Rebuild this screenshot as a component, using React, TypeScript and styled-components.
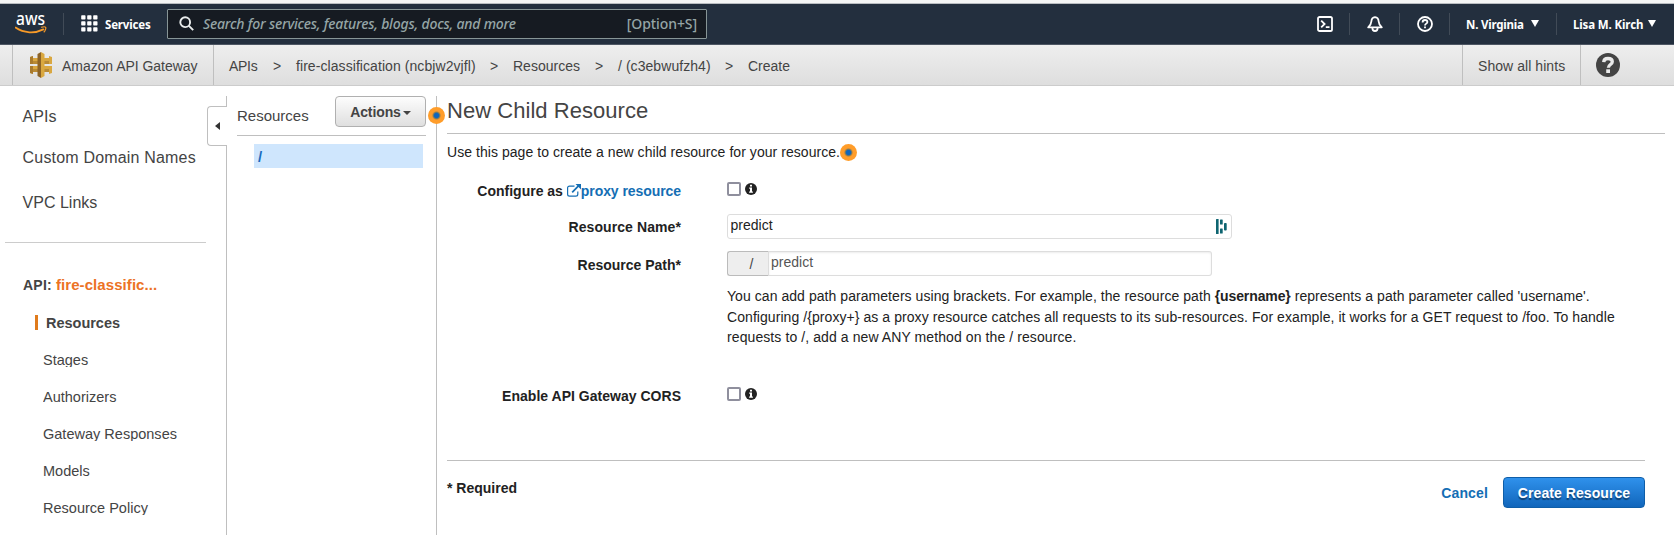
import React from "react";
import styled, { createGlobalStyle, css } from "styled-components";

const GlobalStyle = createGlobalStyle`
  *, *::before, *::after { box-sizing: border-box; }
  body { margin: 0; background: #fff; overflow: hidden; }
  input, button { font-family: inherit; }
`;

const Page = styled.div`
  display: flex;
  flex-direction: column;
  width: 100%;
  height: 100vh;
  overflow: hidden;
  font: 14px/20px "Liberation Sans", Arial, sans-serif;
  color: #222;
`;

/* ---------- top navigation ---------- */

const WindowEdge = styled.div`
  height: 4px;
  flex: none;
  background: #f4f5f5;
  border-bottom: 1px solid #b9bdc1;
`;

const NavBar = styled.header`
  display: flex;
  align-items: center;
  flex: none;
  height: 41px;
  padding: 0 18px 1px 15px;
  background: #232f3e;
  border-bottom: 1px solid #4d5663;
  font: bold 11.5px/20px "Noto Sans", sans-serif;
  color: #fff;
`;

const NavDivider = styled.i`
  width: 1px;
  height: 22px;
  background: #414b57;
`;

const NavText = styled.span`
  padding-top: 2px;
`;

const ServicesButton = styled.div`
  display: flex;
  align-items: center;
  gap: 7px;
  width: 103px;
  padding-left: 17px;
  letter-spacing: -0.18px;
`;

const LogoCell = styled.div`
  width: 48px;
  height: 38px;
`;

const SearchBox = styled.div`
  display: flex;
  align-items: center;
  width: 540px;
  height: 30px;
  padding: 0 9px 0 11px;
  background: #161b22;
  border: 1px solid #879596;
  border-radius: 1px;
  color: #95a5a6;
  font-weight: 500;
  font-size: 14px;
`;

const SearchPlaceholder = styled.span`
  flex: 1;
  margin-left: 9px;
  font-style: italic;
  letter-spacing: -0.2px;
`;

const Shortcut = styled.span`
  letter-spacing: -0.08px;
`;

const NavTools = styled.div`
  display: flex;
  align-items: center;
  margin-left: auto;
`;

const ToolIcon = styled.div`
  display: flex;
  justify-content: center;
  width: 49px;
`;

const NavMenu = styled.div<{ $width: number; $spacing: number }>`
  display: flex;
  align-items: center;
  justify-content: space-between;
  width: ${(p) => p.$width}px;
  padding-left: 16px;
  letter-spacing: ${(p) => p.$spacing}px;
`;

const RegionDivider = styled(NavDivider)`
  margin-left: 17px;
`;

const MenuCaret = styled.i`
  border: 4px solid transparent;
  border-top: 7px solid #fff;
  border-bottom: 0;
`;

/* ---------- service bar ---------- */

const ServiceBar = styled.div`
  display: flex;
  flex: none;
  height: 41px;
  padding-left: 12px;
  background: linear-gradient(#eeeeee, #dedede);
  border-bottom: 1px solid #ccc;
  color: #444;
`;

const BarText = styled.span`
  padding-top: 2px;
`;

const ServiceName = styled.div`
  display: flex;
  align-items: center;
  width: 202px;
  padding-left: 17px;
  border: solid #bfbfbf;
  border-width: 0 1px;
  gap: 9px;
  letter-spacing: -0.04px;
`;

const Crumbs = styled.nav`
  display: flex;
  align-items: center;
  padding: 2px 0 0 15px;
`;

const Crumb = styled.span<{ $width: number; $spacing?: number }>`
  width: ${(p) => p.$width}px;
  white-space: nowrap;
  letter-spacing: ${(p) => p.$spacing ?? 0}px;
`;

const Separator = styled.span`
  width: 23px;
`;

const HintsButton = styled.div`
  display: flex;
  align-items: center;
  width: 119px;
  margin-left: auto;
  padding-left: 15px;
  border: solid #bfbfbf;
  border-width: 0 1px;
  letter-spacing: 0.06px;
`;

const HelpCell = styled.div`
  display: flex;
  align-items: center;
  width: 93px;
  padding-left: 15px;
`;

/* ---------- body columns ---------- */

const Columns = styled.div`
  display: flex;
  flex: 1;
  min-height: 0;
`;

const Sidebar = styled.aside`
  width: 207px;
  padding: 12px 0 0;
  color: #444;
`;

const SideLink = styled.div<{ $height: number; $spacing?: number }>`
  height: ${(p) => p.$height}px;
  padding: 9px 0 0 22.6px;
  font-size: 16px;
  line-height: 20px;
  letter-spacing: ${(p) => p.$spacing ?? 0}px;
`;

const SideRule = styled.hr`
  height: 1px;
  width: 201px;
  margin: 0 0 0 5px;
  border: 0;
  background: #ccc;
`;

const ApiTitle = styled.div`
  display: flex;
  padding: 32px 0 0 23px;
  height: 72px;
  font-weight: bold;
  gap: 4px;
  letter-spacing: 0.25px;
`;

const ApiName = styled.span`
  color: #ec7224;
  font-size: 15px;
  letter-spacing: 0.07px;
`;

const SideItem = styled.div<{ $active?: boolean }>`
  height: 15px;
  margin: 0 0 22px 43px;
  overflow: hidden;
  font-size: 14.5px;
  line-height: 20px;
  letter-spacing: 0.01px;
  ${(p) =>
    p.$active &&
    css`
      margin-left: 35px;
      padding-left: 8px;
      border-left: 3px solid #e07b1c;
      font-weight: bold;
      letter-spacing: -0.02px;
    `}
`;

const ItemText = styled.span`
  display: block;
  margin-top: -2px;
`;

const CollapseGutter = styled.div`
  display: flex;
  flex-direction: column;
  width: 20px;
  padding-top: 10px;
  flex: none;
`;

const GutterLine = styled.div<{ $height?: number }>`
  ${(p) => (p.$height ? `height: ${p.$height}px;` : "flex: 1;")}
  border-right: 1px solid #bfbfbf;
`;

const CollapseTab = styled.div`
  display: flex;
  align-items: center;
  justify-content: flex-start;
  height: 40px;
  padding-left: 7px;
  border: 1px solid #bfbfbf;
  border-right: 0;
  border-radius: 4px 0 0 4px;
`;

const CollapseArrow = styled.i`
  border: 4px solid transparent;
  border-right: 5px solid #333;
  border-left: 0;
`;

const ResourceColumn = styled.section`
  width: 210px;
  flex: none;
  margin-top: 10px;
  border-right: 1px solid #bfbfbf;
  padding-left: 10px;
`;

const ResourceHeader = styled.div`
  display: flex;
  justify-content: space-between;
  width: 189px;
  height: 40px;
  border-bottom: 1px solid #bfbfbf;
  color: #444;
`;

const ResourceHeading = styled.span`
  padding-top: 10px;
  font-size: 15px;
`;

const ActionsButton = styled.button`
  display: flex;
  align-items: center;
  justify-content: center;
  gap: 2px;
  width: 91px;
  height: 31px;
  padding: 0;
  border: 1px solid #b0b0b0;
  border-radius: 4px;
  background: linear-gradient(#fdfdfd, #dfdfdf);
  color: #444;
  font-size: 14px;
  font-weight: bold;
  letter-spacing: -0.1px;
`;

const ButtonCaret = styled.i`
  border: 4px solid transparent;
  border-top-color: #444;
  border-bottom: 0;
  margin-top: 2px;
`;

const SelectedResource = styled.div`
  width: 169px;
  height: 24px;
  margin: 8px 0 0 17px;
  padding: 3px 4px;
  background: #cfe6fd;
  color: #1a6bbd;
  font-weight: bold;
  font-size: 15px;
`;

/* ---------- form ---------- */

const Main = styled.main`
  flex: 1;
  min-width: 0;
  padding: 10px 9px 0 10px;
`;

const TitleRow = styled.div`
  position: relative;
  height: 38px;
  border-bottom: 1px solid #bfbfbf;
`;

const Title = styled.h1`
  margin: 0;
  font-size: 22px;
  font-weight: normal;
  line-height: 30px;
  color: #444;
  letter-spacing: 0.04px;
`;

const HintDot = styled.i`
  display: inline-block;
  flex: none;
  width: 17px;
  height: 17px;
  border-radius: 50%;
  background: radial-gradient(circle, #1166bb 0 2.2px, #7d7a5e 3.2px, #f5982c 4.4px, #ff9d2a 5px);
`;

const TitleHint = styled(HintDot)`
  position: absolute;
  left: -19px;
  top: 11px;
`;

const Intro = styled.div`
  display: flex;
  align-items: center;
  height: 38px;
  padding-bottom: 2px;
  letter-spacing: 0.05px;
`;

const Field = styled.div<{ $height: number }>`
  display: flex;
  height: ${(p) => p.$height}px;
`;

const Label = styled.label<{ $top: number; $spacing?: number }>`
  width: 234px;
  margin-right: 46px;
  flex: none;
  padding-top: ${(p) => p.$top}px;
  text-align: right;
  font-weight: bold;
  white-space: nowrap;
  letter-spacing: ${(p) => p.$spacing ?? 0}px;
`;

const DocLink = styled.a`
  color: #146eb4;
  letter-spacing: -0.07px;
  svg { vertical-align: -1px; }
`;

const CheckRow = styled.div<{ $top: number }>`
  display: flex;
  align-items: center;
  gap: 4px;
  height: 14px;
  margin-top: ${(p) => p.$top}px;
`;

const CheckBox = styled.input`
  appearance: none;
  width: 14px;
  height: 14px;
  margin: 0;
  border: 2px solid #8f8f9d;
  border-radius: 2px;
  background: #fff;
`;

const TextField = styled.div`
  display: flex;
  align-items: center;
  justify-content: space-between;
  width: 505px;
  height: 25px;
  padding: 0 4px 0 0;
  border: 1px solid #ddd;
  border-radius: 3px;
`;

const PathField = styled.div`
  display: flex;
  width: 485px;
  height: 25px;
`;

const PathPrefix = styled.span`
  width: 42px;
  padding: 2px 0 0 21.5px;
  border: 1px solid #bbb;
  border-right-color: #ddd;
  border-radius: 3px 0 0 3px;
  background: #eee;
  color: #444;
`;

const BareInput = styled.input<{ $muted?: boolean }>`
  flex: 1;
  min-width: 0;
  height: 20px;
  padding: 0 0 0 2.5px;
  border: 0;
  outline: 0;
  background: none;
  font-size: 14px;
  line-height: 20px;
  color: #222;
  margin-bottom: 3px;
  ${(p) =>
    p.$muted &&
    css`
      height: 25px;
      padding: 0 0 4px 2px;
      border: 1px solid #ddd;
      border-left: 0;
      border-radius: 0 3px 3px 0;
      box-shadow: inset 0 1px 2px rgba(0, 0, 0, 0.08);
      color: #555;
      margin: 0;
    `}
`;

const Help = styled.p`
  height: 99px;
  margin: 10px 0 0 280px;
  line-height: 20.5px;
  white-space: nowrap;
`;

const HelpLine = styled.span<{ $spacing: number }>`
  display: block;
  letter-spacing: ${(p) => p.$spacing}px;
  b { letter-spacing: -0.1px; }
`;

const Footer = styled.footer`
  display: flex;
  justify-content: flex-end;
  align-items: flex-start;
  width: 1198px;
  padding-top: 16px;
  border-top: 1px solid #bfbfbf;
  font-weight: bold;
`;

const Required = styled.span`
  margin: 1px auto 0 0;
`;

const Cancel = styled.a`
  margin: 6px 15px 0 0;
  color: #146eb4;
  letter-spacing: 0.15px;
`;

const CreateButton = styled.button`
  width: 142px;
  height: 31px;
  padding: 0;
  border: 1px solid #0f5ea8;
  border-radius: 4px;
  background: linear-gradient(#2f91ec, #1166bb);
  color: #fff;
  font-size: 14px;
  font-weight: bold;
  letter-spacing: 0.07px;
  text-shadow: 0 2px 1px rgba(0, 0, 0, 0.45);
`;

/* ---------- icons ---------- */

const LogoSvg = styled.svg`
  display: block;
`;

const AwsLogo = () => (
  <LogoSvg width="34" height="38" viewBox="0 -8 34 38">
    <text x="1" y="12" fontSize="17.5" fontWeight="500" fontFamily="Noto Sans, sans-serif" fill="#fff" textLength="29" lengthAdjust="spacingAndGlyphs">aws</text>
    <path d="M.5 14.6C8.8 20.4 20 20.7 28.4 16.4" fill="none" stroke="#f79a28" strokeWidth="1.8" strokeLinecap="round" />
    <path d="M26.2 14.3c1.8-.5 4-.6 4.5 0 .5.9-.4 3.6-2 5" fill="none" stroke="#f79a28" strokeWidth="1.2" />
  </LogoSvg>
);

const GridIcon = () => (
  <svg width="17" height="17" viewBox="0 0 17 17" fill="#fff">
    {[0, 6, 12].map((y) => [0, 6, 12].map((x) => <rect key={`${x}-${y}`} x={x + 0.2} y={y + 0.2} width="4.3" height="4.3" rx=".7" />))}
  </svg>
);

const SearchIcon = () => (
  <svg width="15" height="15" viewBox="0 0 15 15" fill="none" stroke="#eaeded" strokeWidth="1.9">
    <circle cx="6.2" cy="6.2" r="4.9" />
    <path d="M9.7 9.7 14.2 14.2" />
  </svg>
);

const TerminalIcon = () => (
  <svg width="16" height="16" viewBox="0 0 16 16" fill="none" stroke="#fff" strokeWidth="1.8">
    <rect x="1" y="1" width="14" height="14" rx="1.6" />
    <path d="m4.2 4.6 3.4 3.4-3.4 3.4M8.8 11.2h3.7" />
  </svg>
);

const BellIcon = () => (
  <svg width="16" height="16" viewBox="0 0 16 16" fill="none" stroke="#fff" strokeWidth="1.8" strokeLinejoin="round">
    <path d="M8 1.2C5.8 1.4 4.5 3.1 4.4 5.3 4.3 8.1 3 9.6 1.2 11.3h13.6C13 9.6 11.7 8.1 11.6 5.3 11.5 3.1 10.2 1.4 8 1.2Z" />
    <path d="M5.4 12c0 1.9 1 3 2.6 3s2.6-1.1 2.6-3" />
  </svg>
);

const HelpIcon = () => (
  <svg width="16" height="16" viewBox="0 0 16 16" fill="none" stroke="#fff" strokeWidth="1.8">
    <circle cx="8" cy="8" r="7" />
    <path d="M5.6 6.4C5.6 4.9 6.6 4 8 4s2.4.8 2.4 2c0 1.6-2.4 1.7-2.4 3.5M8 10.5v1.7" />
  </svg>
);

const GatewayIcon = () => (
  <svg width="23" height="26" viewBox="0 0 23 26">
    <path fill="#d9a741" d="M0 5l3-1v2h5v2h6V6h5V4l3 1v7h-8v2h8v7l-3 1v-2h-5v-2H8v2H3v2l-3-1v-7h8v-2H0z" />
    <path fill="#a87a2e" d="M0 5l3-1v8H0zM0 14h3v8l-3-1z" />
    <path fill="#b98a35" d="M3 9h5v3H3zM14 9h5v3h-5zM3 17h5v3H3zM14 17h5v3h-5z" />
    <path fill="#8e6427" d="M7.5 2 11 0v26l-3.5-2z" />
    <path fill="#daa840" d="m11 0 3.5 2v22L11 26z" />
  </svg>
);

const HelpBadge = () => (
  <svg width="24" height="24" viewBox="0 0 24 24">
    <circle cx="12" cy="12" r="12" fill="#444" />
    <path d="M7.7 9.1C7.8 6.6 9.5 5.5 12 5.5c2.6 0 4.3 1.2 4.3 3.2 0 2.8-3.9 2.8-3.9 6" fill="none" stroke="#eaeaea" strokeWidth="3.3" />
    <path fill="#eaeaea" d="M10.2 16.3H14V20h-3.8z" />
  </svg>
);

const ExternalIcon = () => (
  <svg width="14" height="13" viewBox="0 0 14 13" fill="none" stroke="#146eb4">
    <path strokeWidth="1.2" d="M7.5 2.1H2.6C1.3 2.1.6 2.8.6 4v6.3c0 1.2.7 1.9 2 1.9h6.2c1.3 0 2-.7 2-1.9V7.5" />
    <path strokeWidth="1.7" d="m5.2 8.3 6.5-6.6" />
    <path fill="#146eb4" stroke="none" d="M8.5 0H14v5.5z" />
  </svg>
);

const InfoIcon = () => (
  <svg width="12" height="12" viewBox="0 0 12 12">
    <circle cx="6" cy="6" r="6" fill="#222" />
    <path fill="#fff" d="M5 1.7h2v1.7H5zM4.2 4.5H7V8.5h.9v1.2H4.1V8.5H5V5.7h-.8z" />
  </svg>
);

const ManagerIcon = () => (
  <svg width="11" height="15" viewBox="0 0 11 15" fill="#0e6571">
    <rect width="2.6" height="15" rx=".5" />
    <rect x="4" y=".5" width="2.7" height="5" rx=".5" />
    <rect x="4" y="9.5" width="2.7" height="5" rx=".5" />
    <rect x="8" y="4" width="2.7" height="7.5" rx=".8" />
  </svg>
);

const sideItems = ["Stages", "Authorizers", "Gateway Responses", "Models", "Resource Policy"];

export default function App() {
  return (
    <Page>
      <GlobalStyle />
      <WindowEdge />
      <NavBar>
        <LogoCell><AwsLogo /></LogoCell>
        <NavDivider />
        <ServicesButton><GridIcon /><NavText>Services</NavText></ServicesButton>
        <SearchBox>
          <SearchIcon />
          <SearchPlaceholder>Search for services, features, blogs, docs, and more</SearchPlaceholder>
          <Shortcut>[Option+S]</Shortcut>
        </SearchBox>
        <NavTools>
          <ToolIcon><TerminalIcon /></ToolIcon>
          <NavDivider />
          <ToolIcon><BellIcon /></ToolIcon>
          <NavDivider />
          <ToolIcon><HelpIcon /></ToolIcon>
          <NavDivider />
          <NavMenu $width={89} $spacing={-0.22}><NavText>N. Virginia</NavText><MenuCaret /></NavMenu>
          <RegionDivider />
          <NavMenu $width={99} $spacing={-0.13}><NavText>Lisa M. Kirch</NavText><MenuCaret /></NavMenu>
        </NavTools>
      </NavBar>
      <ServiceBar>
        <ServiceName><GatewayIcon /><BarText>Amazon API Gateway</BarText></ServiceName>
        <Crumbs>
          <Crumb $width={44} $spacing={-0.3}>APIs</Crumb>
          <Separator>&gt;</Separator>
          <Crumb $width={194} $spacing={0.07}>fire-classification (ncbjw2vjfl)</Crumb>
          <Separator>&gt;</Separator>
          <Crumb $width={82}>Resources</Crumb>
          <Separator>&gt;</Separator>
          <Crumb $width={107} $spacing={0.06}>/ (c3ebwufzh4)</Crumb>
          <Separator>&gt;</Separator>
          <Crumb $width={44}>Create</Crumb>
        </Crumbs>
        <HintsButton><BarText>Show all hints</BarText></HintsButton>
        <HelpCell><HelpBadge /></HelpCell>
      </ServiceBar>
      <Columns>
        <Sidebar>
          <SideLink $height={41}>APIs</SideLink>
          <SideLink $height={45} $spacing={0.18}>Custom Domain Names</SideLink>
          <SideLink $height={58}>VPC Links</SideLink>
          <SideRule />
          <ApiTitle>API: <ApiName>fire-classific...</ApiName></ApiTitle>
          <SideItem $active><ItemText>Resources</ItemText></SideItem>
          {sideItems.map((name) => (
            <SideItem key={name}><ItemText>{name}</ItemText></SideItem>
          ))}
        </Sidebar>
        <CollapseGutter>
          <GutterLine $height={10} />
          <CollapseTab><CollapseArrow /></CollapseTab>
          <GutterLine />
        </CollapseGutter>
        <ResourceColumn>
          <ResourceHeader>
            <ResourceHeading>Resources</ResourceHeading>
            <ActionsButton>Actions<ButtonCaret /></ActionsButton>
          </ResourceHeader>
          <SelectedResource>/</SelectedResource>
        </ResourceColumn>
        <Main>
          <TitleRow>
            <TitleHint />
            <Title>New Child Resource</Title>
          </TitleRow>
          <Intro>Use this page to create a new child resource for your resource.<HintDot /></Intro>
          <Field $height={42}>
            <Label $top={9}>Configure as <DocLink><ExternalIcon />proxy resource</DocLink></Label>
            <CheckRow $top={10}><CheckBox type="checkbox" /><InfoIcon /></CheckRow>
          </Field>
          <Field $height={37}>
            <Label $top={3} $spacing={0.09}>Resource Name*</Label>
            <TextField><BareInput defaultValue="predict" /><ManagerIcon /></TextField>
          </Field>
          <Field $height={25}>
            <Label $top={4}>Resource Path*</Label>
            <PathField><PathPrefix>/</PathPrefix><BareInput $muted defaultValue="predict" /></PathField>
          </Field>
          <Help>
            <HelpLine $spacing={0.055}>You can add path parameters using brackets. For example, the resource path <b>{"{username}"}</b> represents a path parameter called 'username'.</HelpLine>
            <HelpLine $spacing={0.065}>Configuring /{"{proxy+}"} as a proxy resource catches all requests to its sub-resources. For example, it works for a GET request to /foo. To handle</HelpLine>
            <HelpLine $spacing={0.09}>requests to /, add a new ANY method on the / resource.</HelpLine>
          </Help>
          <Field $height={75}>
            <Label $top={1} $spacing={0.02}>Enable API Gateway CORS</Label>
            <CheckRow $top={2}><CheckBox type="checkbox" /><InfoIcon /></CheckRow>
          </Field>
          <Footer>
            <Required>* Required</Required>
            <Cancel>Cancel</Cancel>
            <CreateButton>Create Resource</CreateButton>
          </Footer>
        </Main>
      </Columns>
    </Page>
  );
}
